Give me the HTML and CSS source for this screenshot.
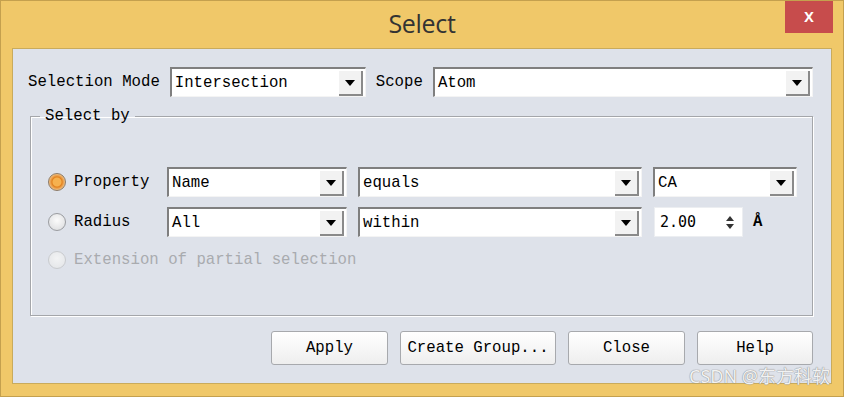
FILE: index.html
```html
<!DOCTYPE html>
<html lang="en">
<head>
    <meta charset="UTF-8">
    <title>Select</title>
    <link rel="stylesheet" href="styles.css">
</head>
<body>
    <div class="window">
        <div class="titlebar">
            <span></span>
            <span class="title">Select</span>
            <button class="close" type="button">x</button>
        </div>

        <div class="client">
            <div class="topRow">
                <label>Selection Mode</label>
                <div class="combo mode"><span>Intersection</span><i class="arrow"></i></div>
                <label>Scope</label>
                <div class="combo scope"><span>Atom</span><i class="arrow"></i></div>
            </div>

            <fieldset class="group">
                <legend>Select by</legend>
                <div class="grid">
                    <div class="choice"><i class="radio checked"></i>Property</div>
                    <div class="combo"><span>Name</span><i class="arrow"></i></div>
                    <div class="combo"><span>equals</span><i class="arrow"></i></div>
                    <div class="combo"><span>CA</span><i class="arrow"></i></div>

                    <div class="choice"><i class="radio"></i>Radius</div>
                    <div class="combo"><span>All</span><i class="arrow"></i></div>
                    <div class="combo"><span>within</span><i class="arrow"></i></div>
                    <div class="spinRow">
                        <div class="spin"><span>2.00</span><i class="spinArrows"><b class="up"></b><b class="down"></b></i></div>
                        <span class="unit">Å</span>
                    </div>

                    <div class="choice disabled wide"><i class="radio"></i>Extension of partial selection</div>
                </div>
            </fieldset>

            <div class="buttons">
                <button type="button" class="apply">Apply</button>
                <button type="button" class="create">Create Group...</button>
                <button type="button" class="apply">Close</button>
                <button type="button" class="help">Help</button>
            </div>
        </div>

        <div class="watermark">CSDN @东方科软</div>
    </div>
</body>
</html>
```

FILE: styles.css
```css
body {
    margin: 0;
    font-family: "Liberation Mono", "DejaVu Sans Mono", monospace;
}

.window {
    position: relative;
    width: 844px;
    height: 397px;
    box-sizing: border-box;
    border: 1px solid #c4a04e;
    background-color: #f0c869;
    padding: 0 11px 12px 11px;
    display: flex;
    flex-direction: column;
}

.titlebar {
    height: 47px;
    flex-shrink: 0;
    display: grid;
    grid-template-columns: 1fr auto 1fr;
}

.title {
    font-family: "Open Sans", "Noto Sans", sans-serif;
    font-size: 25px;
    color: #333;
    letter-spacing: -0.3px;
    line-height: 45px;
}

.close {
    justify-self: end;
    width: 48px;
    height: 32px;
    margin-right: -1px;
    border: none;
    background-color: #c74c4c;
    color: #fff;
    font-family: "Open Sans", sans-serif;
    font-size: 18px;
    font-weight: 600;
    padding: 0 0 4px 0;
}

.client {
    flex: 1;
    background-color: #dee2ea;
    border: 1px solid #c9ab5c;
    padding: 18px 18px 0 15px;
    font-size: 15.7px;
    color: #000;
}

.topRow {
    display: flex;
    align-items: center;
    gap: 10px;
}

.combo {
    height: 30px;
    box-sizing: border-box;
    background-color: #fff;
    border-top: 2px solid #7f7f7f;
    border-left: 2px solid #7f7f7f;
    border-right: 1px solid #f4f4f4;
    border-bottom: 1px solid #f4f4f4;
    display: flex;
    align-items: center;
    padding-left: 3px;
}

.combo span {
    flex: 1;
}

.arrow {
    width: 24px;
    height: 25px;
    margin-right: 2px;
    margin-top: 1px;
    box-sizing: border-box;
    background-color: #f2f2f2;
    border-right: 2px solid #8a8a8a;
    border-bottom: 2px solid #8a8a8a;
    position: relative;
}

.arrow::after {
    content: "";
    position: absolute;
    left: 6px;
    top: 9px;
    border-left: 5px solid transparent;
    border-right: 5px solid transparent;
    border-top: 6px solid #000;
}

.mode {
    width: 196px;
}

.scope {
    flex: 1;
}

.group {
    margin: 10px 0 0 2px;
    padding: 0;
    height: 209px;
    box-sizing: border-box;
    border: 1px solid #a4a6aa;
    box-shadow: inset 1px 1px 0 #fff, 1px 1px 0 #fff;
}

.group legend {
    margin-left: 9px;
    padding: 0 5px;
    line-height: 18px;
}

.grid {
    display: grid;
    grid-template-columns: 108px 180px 284px 144px;
    grid-auto-rows: 30px;
    column-gap: 11px;
    row-gap: 10px;
    padding: 42px 0 0 17px;
}

.choice {
    display: flex;
    align-items: center;
    gap: 8px;
}

.wide {
    grid-column: 1 / -1;
    height: 26px;
}

.disabled {
    color: #a9abaf;
}

.radio {
    width: 18px;
    height: 18px;
    box-sizing: border-box;
    border-radius: 50%;
    border: 1px solid #9a9ca0;
    background: radial-gradient(circle at 50% 40%, #fbfbfb, #d9dadc);
}

.radio.checked {
    border-color: #8c7a66;
    background: radial-gradient(circle, #f6b14f 0 4px, #e2811d 5px, #f3c284 8px);
}

.disabled .radio {
    border-color: #c9cbce;
    background: radial-gradient(circle at 50% 40%, #f2f3f4, #e2e4e7);
}

.spinRow {
    display: flex;
    align-items: center;
    gap: 10px;
    padding-left: 1px;
}

.spin {
    width: 89px;
    height: 30px;
    box-sizing: border-box;
    background-color: #fff;
    border: 1px solid #eceef1;
    display: flex;
    align-items: center;
    padding-left: 5px;
    font-family: "DejaVu Sans Mono", monospace;
    font-size: 15px;
}

.spin span {
    flex: 1;
}

.spinArrows {
    width: 24px;
    display: flex;
    flex-direction: column;
    align-items: center;
    gap: 3px;
}

.spinArrows .up {
    border-left: 4px solid transparent;
    border-right: 4px solid transparent;
    border-bottom: 5px solid #333;
}

.spinArrows .down {
    border-left: 4px solid transparent;
    border-right: 4px solid transparent;
    border-top: 5px solid #333;
}

.unit {
    font-weight: bold;
}

.buttons {
    display: flex;
    justify-content: flex-end;
    gap: 12px;
    margin-top: 15px;
}

.buttons button {
    height: 34px;
    width: 117px;
    font-family: "Liberation Mono", monospace;
    font-size: 15.7px;
    color: #000;
    border: 1px solid #a7a9ad;
    border-radius: 3px;
    background: linear-gradient(#ffffff, #eeeeee);
    padding: 0;
}

.buttons .create {
    width: 156px;
}

.buttons .help {
    width: 116px;
}

.watermark {
    position: absolute;
    right: 13px;
    bottom: 8px;
    font-family: "Noto Sans", "Noto Sans CJK SC", sans-serif;
    font-size: 18px;
    color: #f2f2f2;
    text-shadow: 0 0 1px #8a8a8a, 0 0 1px #8a8a8a;
}
```
